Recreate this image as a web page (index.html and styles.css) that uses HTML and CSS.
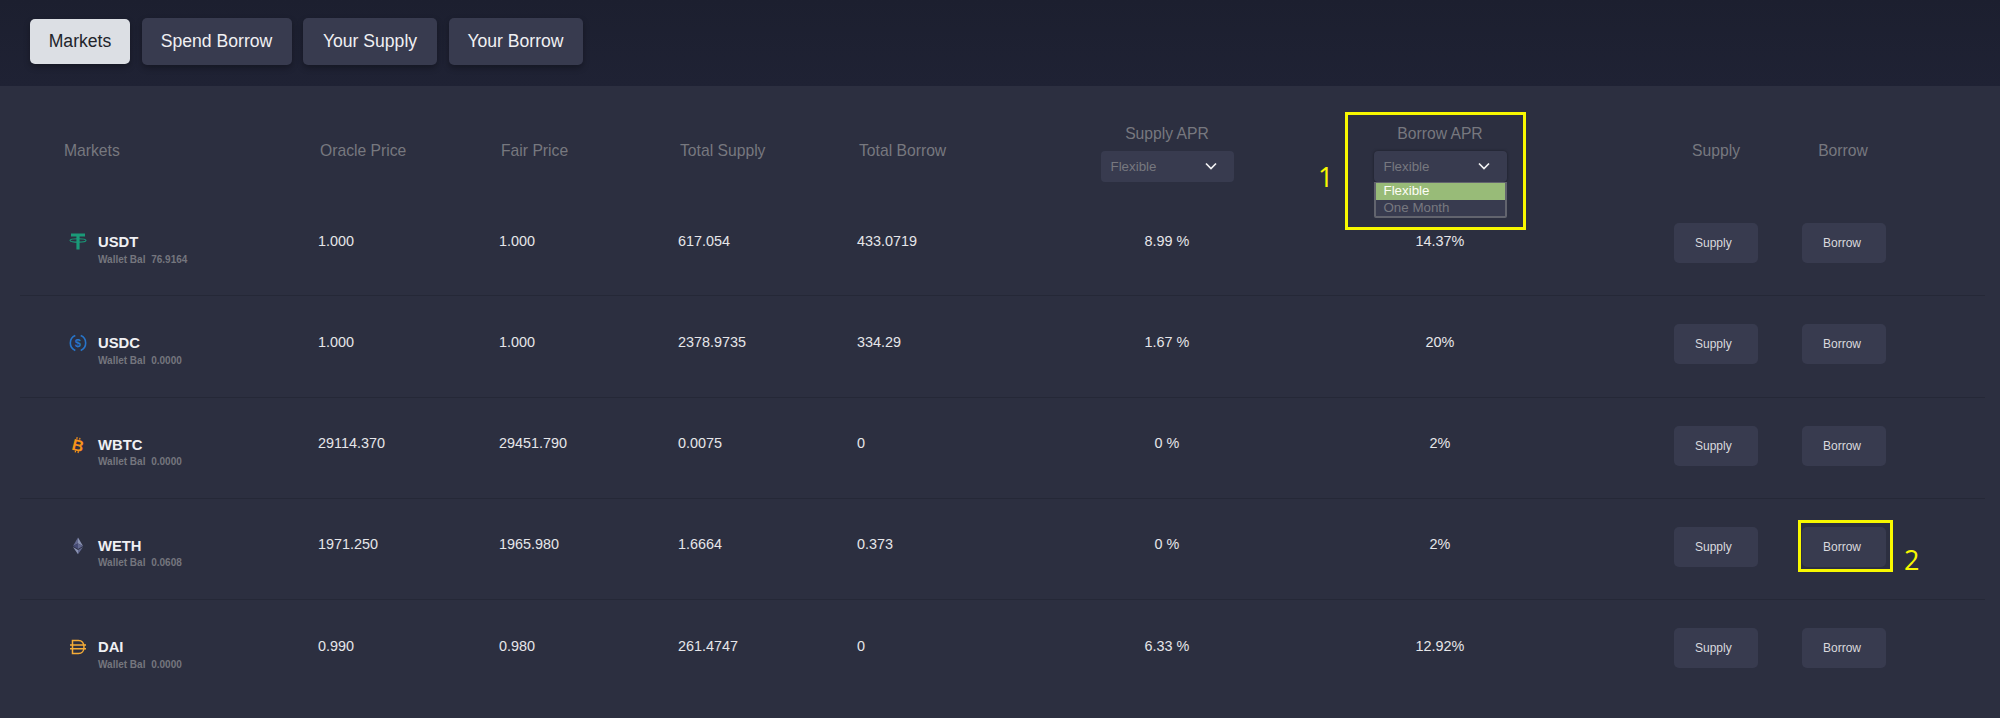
FILE: index.html
```html
<!DOCTYPE html>
<html lang="en">
<head>
    <meta charset="UTF-8">
    <title>Markets</title>
    <link rel="stylesheet" href="styles.css">
</head>
<body>
<div class="topbar">
    <button class="tab tab-active">Markets</button>
    <button class="tab">Spend Borrow</button>
    <button class="tab">Your Supply</button>
    <button class="tab">Your Borrow</button>
</div>

<div class="market-table">
    <div class="row head-row">
        <div class="head-cell">Markets</div>
        <div class="head-cell">Oracle Price</div>
        <div class="head-cell">Fair Price</div>
        <div class="head-cell">Total Supply</div>
        <div class="head-cell">Total Borrow</div>
        <div class="head-cell head-apr">
            Supply APR
            <div class="fake-select"><span>Flexible</span>
                <svg class="chevron" viewBox="0 0 12 8"><path d="M1 1.5 6 6.5 11 1.5"/></svg>
            </div>
        </div>
        <div class="head-cell head-apr">
            Borrow APR
            <div class="fake-select select-open"><span>Flexible</span>
                <svg class="chevron" viewBox="0 0 12 8"><path d="M1 1.5 6 6.5 11 1.5"/></svg>
                <div class="select-list">
                    <div class="select-option option-on">Flexible</div>
                    <div class="select-option">One Month</div>
                </div>
            </div>
            <div class="mark mark-apr"></div>
            <div class="mark-num num-one">1</div>
        </div>
        <div class="head-cell head-action col-supply">Supply</div>
        <div class="head-cell head-action col-borrow">Borrow</div>
    </div>

    <div class="row">
        <div class="asset">
            <svg class="coin" viewBox="0 0 18 18">
                <path fill="#1a9a78" d="M2 0.5H16V3.4H10.6V6L10.6 16.5H7.4V3.4H2Z"/>
                <ellipse cx="9" cy="7.4" rx="8" ry="1.7" fill="none" stroke="#1a9a78" stroke-width="1.1"/>
            </svg>
            <div>
                <div class="asset-name">USDT</div>
                <div class="wallet">Wallet Bal <span>76.9164</span></div>
            </div>
        </div>
        <div class="val">1.000</div>
        <div class="val">1.000</div>
        <div class="val">617.054</div>
        <div class="val">433.0719</div>
        <div class="val val-mid">8.99 %</div>
        <div class="val val-mid">14.37%</div>
        <div class="action col-supply"><button class="small-btn">Supply</button></div>
        <div class="action"><button class="small-btn">Borrow</button></div>
    </div>

    <div class="row">
        <div class="asset">
            <svg class="coin" viewBox="0 0 18 18">
                <path fill="none" stroke="#2775ca" stroke-width="1.6" d="M6.3 1.6A8 8 0 0 0 6.3 16.4M11.7 1.6A8 8 0 0 1 11.7 16.4"/>
                <text x="9" y="12.8" text-anchor="middle" class="coin-usd">$</text>
            </svg>
            <div>
                <div class="asset-name">USDC</div>
                <div class="wallet">Wallet Bal <span>0.0000</span></div>
            </div>
        </div>
        <div class="val">1.000</div>
        <div class="val">1.000</div>
        <div class="val">2378.9735</div>
        <div class="val">334.29</div>
        <div class="val val-mid">1.67 %</div>
        <div class="val val-mid">20%</div>
        <div class="action col-supply"><button class="small-btn">Supply</button></div>
        <div class="action"><button class="small-btn">Borrow</button></div>
    </div>

    <div class="row">
        <div class="asset">
            <svg class="coin" viewBox="0 0 18 18">
                <text x="9" y="15" text-anchor="middle" transform="rotate(14 9 9)" class="coin-btc">B</text>
                <path stroke="#f7931a" stroke-width="1.2" d="M8.2 1.2 7.8 3M11 1.8 10.6 3.6M6.6 14.6 6.2 16.4M9.4 15.2 9 17"/>
            </svg>
            <div>
                <div class="asset-name">WBTC</div>
                <div class="wallet">Wallet Bal <span>0.0000</span></div>
            </div>
        </div>
        <div class="val">29114.370</div>
        <div class="val">29451.790</div>
        <div class="val">0.0075</div>
        <div class="val">0</div>
        <div class="val val-mid">0 %</div>
        <div class="val val-mid">2%</div>
        <div class="action col-supply"><button class="small-btn">Supply</button></div>
        <div class="action"><button class="small-btn">Borrow</button></div>
    </div>

    <div class="row">
        <div class="asset">
            <svg class="coin" viewBox="0 0 18 18">
                <path fill="#8a92b2" d="M9 0.5 9 6.4 14 9Z"/>
                <path fill="#62688f" d="M9 0.5 4 9 9 6.4Z"/>
                <path fill="#454a75" d="M9 6.4 4 9 9 12Z"/>
                <path fill="#62688f" d="M9 6.4 14 9 9 12Z"/>
                <path fill="#8a92b2" d="M4 10 9 17.2 9 13Z"/>
                <path fill="#62688f" d="M14 10 9 17.2 9 13Z"/>
            </svg>
            <div>
                <div class="asset-name">WETH</div>
                <div class="wallet">Wallet Bal <span>0.0608</span></div>
            </div>
        </div>
        <div class="val">1971.250</div>
        <div class="val">1965.980</div>
        <div class="val">1.6664</div>
        <div class="val">0.373</div>
        <div class="val val-mid">0 %</div>
        <div class="val val-mid">2%</div>
        <div class="action col-supply"><button class="small-btn">Supply</button></div>
        <div class="action">
            <button class="small-btn">Borrow</button>
            <div class="mark mark-btn"></div>
            <div class="mark-num num-two">2</div>
        </div>
    </div>

    <div class="row last-row">
        <div class="asset">
            <svg class="coin" viewBox="0 0 18 18">
                <path fill="none" stroke="#f5ac37" stroke-width="1.5" d="M3.5 2.4H9.5C12.8 2.4 15 5.2 15 9S12.8 15.6 9.5 15.6H3.5ZM1 7H17M1 10.8H17"/>
            </svg>
            <div>
                <div class="asset-name">DAI</div>
                <div class="wallet">Wallet Bal <span>0.0000</span></div>
            </div>
        </div>
        <div class="val">0.990</div>
        <div class="val">0.980</div>
        <div class="val">261.4747</div>
        <div class="val">0</div>
        <div class="val val-mid">6.33 %</div>
        <div class="val val-mid">12.92%</div>
        <div class="action col-supply"><button class="small-btn">Supply</button></div>
        <div class="action"><button class="small-btn">Borrow</button></div>
    </div>
</div>
</body>
</html>
```

FILE: styles.css
```css
html, body {
    margin: 0;
    height: 718px;
    overflow: hidden;
}
body {
    background-color: #2c2f40;
    font-family: "Liberation Sans", Arial, sans-serif;
    color: #e6e6e9;
}
button {
    font-family: inherit;
    border: none;
    cursor: pointer;
}

.topbar {
    height: 86px;
    box-sizing: border-box;
    padding: 18px 0 0 30px;
    display: flex;
    align-items: flex-start;
    gap: 11.5px;
    background: linear-gradient(#1c1f2f, #1f2234);
}
.tab {
    height: 47px;
    width: 134px;
    padding: 0;
    font-size: 17.6px;
    color: #f0f0f3;
    background-color: #383b4f;
    border-radius: 5px;
    box-shadow: 0 3px 6px rgba(0, 0, 0, 0.3);
}
.tab:nth-child(2) {
    width: 150px;
}
.tab-active {
    width: 100px;
    height: 45px;
    margin-top: 1px;
    color: #22242a;
    background-color: #dcdfe4;
}

.market-table {
    margin: 0 15px 0 20px;
}
.row {
    display: grid;
    grid-template-columns: 298px 181px 179px 179px 173px 274px 272px 216px 104px;
    height: 101.3px;
    box-sizing: border-box;
    border-bottom: 1px solid #252837;
}
.head-row {
    height: 109px;
    padding-top: 21px;
    border-bottom: none;
    align-items: center;
}
.last-row {
    border-bottom: none;
}
.head-cell {
    padding-left: 2px;
    font-size: 15.7px;
    color: #77787f;
}
.head-cell:first-child {
    padding-left: 44px;
}
.head-apr {
    position: relative;
    top: 2.5px;
    padding-left: 0;
    display: flex;
    flex-direction: column;
    align-items: center;
    gap: 8px;
}
.head-action {
    padding-left: 0;
    text-align: center;
}
.col-supply {
    margin-left: 64px;
}
.col-borrow {
    padding-right: 2px;
}

.fake-select {
    position: relative;
    width: 133px;
    height: 31px;
    box-sizing: border-box;
    padding-left: 10px;
    display: flex;
    align-items: center;
    font-size: 13.33px;
    background-color: #383b4f;
    border-radius: 4px;
}
.select-open {
    box-shadow: 0 0 3px rgba(0, 0, 0, 0.4);
}
.chevron {
    position: absolute;
    left: 104px;
    top: 11px;
    width: 12px;
    height: 8px;
    fill: none;
    stroke: #f2f2f4;
    stroke-width: 1.7;
}
.select-list {
    position: absolute;
    left: 0;
    top: 31px;
    width: 133px;
    box-sizing: border-box;
    border: 2px solid #62646e;
    border-top-width: 1px;
    border-radius: 0 0 2px 2px;
    background-color: #383b4f;
}
.select-option {
    height: 16.5px;
    line-height: 16px;
    padding-left: 8px;
    font-size: 13.33px;
}
.option-on {
    color: #fdfdf5;
    background-color: #98bb78;
}

.mark {
    position: absolute;
    box-sizing: border-box;
    border: 3.5px solid #f8f800;
    pointer-events: none;
}
.mark-apr {
    left: 41px;
    top: -13px;
    width: 181px;
    height: 118px;
}
.mark-btn {
    left: 6px;
    top: 21px;
    width: 95px;
    height: 52px;
}
.mark-num {
    position: absolute;
    font-family: "Open Sans", sans-serif;
    font-size: 27px;
    line-height: 30px;
    color: #f8f800;
}
.num-one {
    left: 14px;
    top: 37px;
}
.num-two {
    left: 112px;
    top: 46px;
}

.asset {
    padding: 38px 0 0 49px;
    display: flex;
    align-items: flex-start;
    gap: 11px;
}
.coin {
    width: 18px;
    height: 18px;
    flex-shrink: 0;
}
.coin-usd {
    font-size: 11px;
    font-weight: bold;
    fill: #2775ca;
}
.coin-btc {
    font-size: 16px;
    font-weight: bold;
    fill: #f7931a;
}
.asset-name {
    margin-top: 1px;
    font-size: 14.8px;
    line-height: 16px;
    font-weight: bold;
    color: #f0f0f3;
}
.wallet {
    margin-top: 3.5px;
    font-size: 10px;
    line-height: 11px;
    font-weight: bold;
    color: #75767e;
}
.wallet span {
    margin-left: 3px;
}
.val {
    padding-top: 37.5px;
    font-size: 14.4px;
    line-height: 17px;
}
.val-mid {
    text-align: center;
}
.action {
    position: relative;
    padding-top: 28px;
    display: flex;
    justify-content: center;
    align-items: flex-start;
}
.small-btn {
    width: 84px;
    height: 40px;
    padding: 0 0 0 21px;
    text-align: left;
    font-size: 12px;
    color: #d8d9de;
    background-color: #383b4f;
    border-radius: 5px;
}
```
